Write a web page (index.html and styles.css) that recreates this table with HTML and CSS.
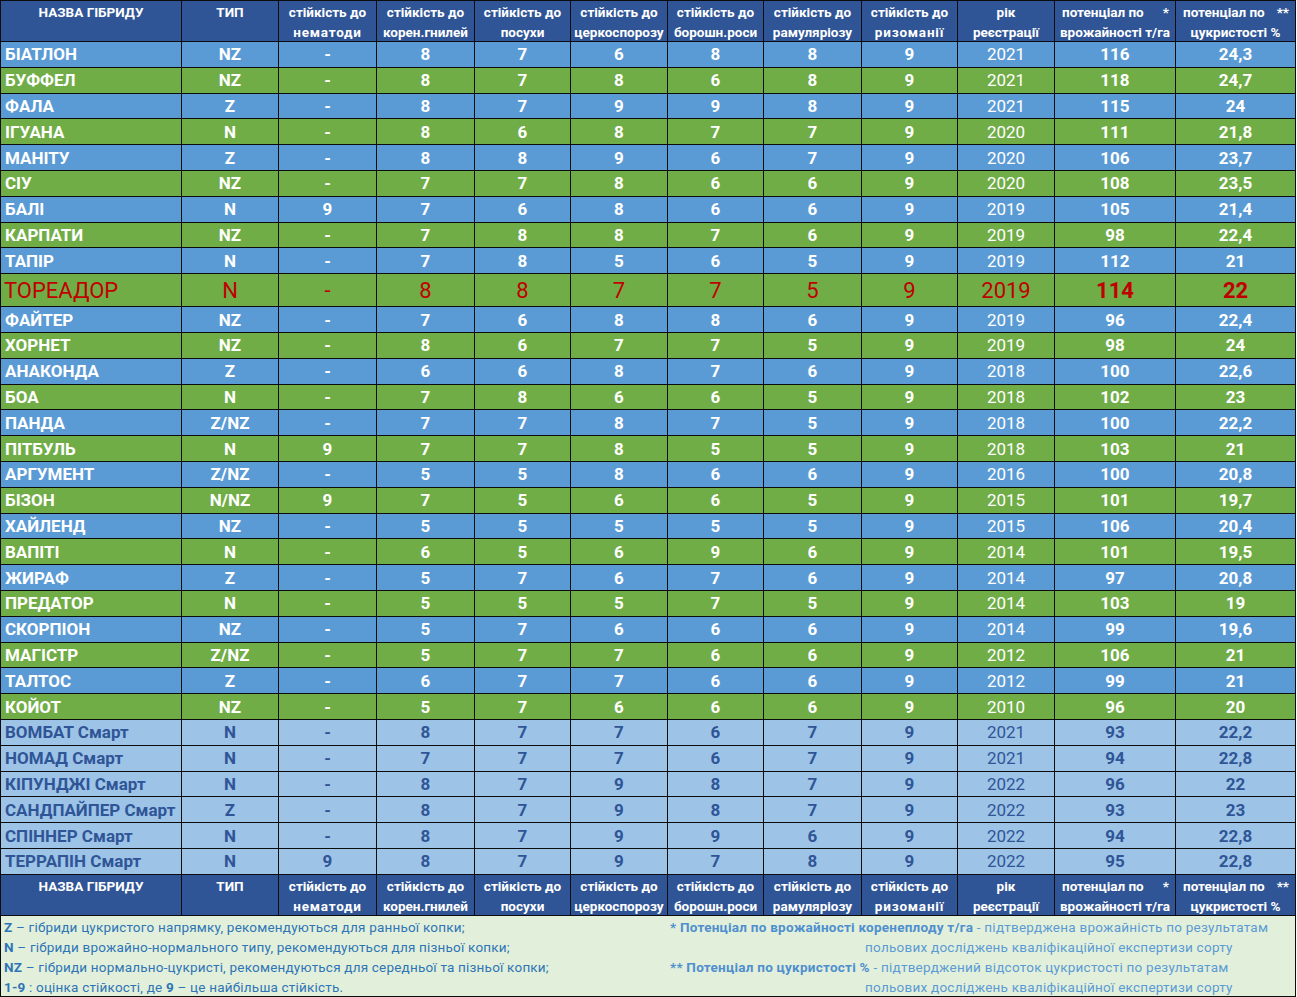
FILE: index.html
```html
<!DOCTYPE html>
<html lang="uk">
<head>
<meta charset="utf-8">
<title>Гібриди цукрового буряка</title>
<link rel="stylesheet" href="styles.css">
</head>
<body>
<div class="sheet">
  <div class="row head">
    <div><span>НАЗВА ГІБРИДУ</span></div>
    <div><span>ТИП</span></div>
    <div><span>стійкість до</span><span class="ls">нематоди</span></div>
    <div><span>стійкість до</span><span>корен.гнилей</span></div>
    <div><span>стійкість до</span><span>посухи</span></div>
    <div><span>стійкість до</span><span>церкоспорозу</span></div>
    <div><span>стійкість до</span><span>борошн.роси</span></div>
    <div><span>стійкість до</span><span>рамуляріозу</span></div>
    <div><span>стійкість до</span><span class="ls">ризоманії</span></div>
    <div><span>рік</span><span>реєстрації</span></div>
    <div class="pot"><span class="l1"><span>потенціал по</span><span>*</span></span><span>врожайності т/га</span></div>
    <div class="pot"><span class="l1"><span>потенціал по</span><span>**</span></span><span>цукристості %</span></div>
  </div>

  <div class="row blue"><div class="name">БІАТЛОН</div><div>NZ</div><div>-</div><div>8</div><div>7</div><div>6</div><div>8</div><div>8</div><div>9</div><div class="yr">2021</div><div>116</div><div>24,3</div></div>
  <div class="row green"><div class="name">БУФФЕЛ</div><div>NZ</div><div>-</div><div>8</div><div>7</div><div>8</div><div>6</div><div>8</div><div>9</div><div class="yr">2021</div><div>118</div><div>24,7</div></div>
  <div class="row blue"><div class="name">ФАЛА</div><div>Z</div><div>-</div><div>8</div><div>7</div><div>9</div><div>9</div><div>8</div><div>9</div><div class="yr">2021</div><div>115</div><div>24</div></div>
  <div class="row green"><div class="name">ІГУАНА</div><div>N</div><div>-</div><div>8</div><div>6</div><div>8</div><div>7</div><div>7</div><div>9</div><div class="yr">2020</div><div>111</div><div>21,8</div></div>
  <div class="row blue"><div class="name">МАНІТУ</div><div>Z</div><div>-</div><div>8</div><div>8</div><div>9</div><div>6</div><div>7</div><div>9</div><div class="yr">2020</div><div>106</div><div>23,7</div></div>
  <div class="row green"><div class="name">СІУ</div><div>NZ</div><div>-</div><div>7</div><div>7</div><div>8</div><div>6</div><div>6</div><div>9</div><div class="yr">2020</div><div>108</div><div>23,5</div></div>
  <div class="row blue"><div class="name">БАЛІ</div><div>N</div><div>9</div><div>7</div><div>6</div><div>8</div><div>6</div><div>6</div><div>9</div><div class="yr">2019</div><div>105</div><div>21,4</div></div>
  <div class="row green"><div class="name">КАРПАТИ</div><div>NZ</div><div>-</div><div>7</div><div>8</div><div>8</div><div>7</div><div>6</div><div>9</div><div class="yr">2019</div><div>98</div><div>22,4</div></div>
  <div class="row blue"><div class="name">ТАПІР</div><div>N</div><div>-</div><div>7</div><div>8</div><div>5</div><div>6</div><div>5</div><div>9</div><div class="yr">2019</div><div>112</div><div>21</div></div>
  <div class="row tor"><div class="name">ТОРЕАДОР</div><div>N</div><div>-</div><div>8</div><div>8</div><div>7</div><div>7</div><div>5</div><div>9</div><div class="yr">2019</div><div class="b">114</div><div class="b">22</div></div>
  <div class="row blue"><div class="name">ФАЙТЕР</div><div>NZ</div><div>-</div><div>7</div><div>6</div><div>8</div><div>8</div><div>6</div><div>9</div><div class="yr">2019</div><div>96</div><div>22,4</div></div>
  <div class="row green"><div class="name">ХОРНЕТ</div><div>NZ</div><div>-</div><div>8</div><div>6</div><div>7</div><div>7</div><div>5</div><div>9</div><div class="yr">2019</div><div>98</div><div>24</div></div>
  <div class="row blue"><div class="name">АНАКОНДА</div><div>Z</div><div>-</div><div>6</div><div>6</div><div>8</div><div>7</div><div>6</div><div>9</div><div class="yr">2018</div><div>100</div><div>22,6</div></div>
  <div class="row green"><div class="name">БОА</div><div>N</div><div>-</div><div>7</div><div>8</div><div>6</div><div>6</div><div>5</div><div>9</div><div class="yr">2018</div><div>102</div><div>23</div></div>
  <div class="row blue"><div class="name">ПАНДА</div><div>Z/NZ</div><div>-</div><div>7</div><div>7</div><div>8</div><div>7</div><div>5</div><div>9</div><div class="yr">2018</div><div>100</div><div>22,2</div></div>
  <div class="row green"><div class="name">ПІТБУЛЬ</div><div>N</div><div>9</div><div>7</div><div>7</div><div>8</div><div>5</div><div>5</div><div>9</div><div class="yr">2018</div><div>103</div><div>21</div></div>
  <div class="row blue"><div class="name">АРГУМЕНТ</div><div>Z/NZ</div><div>-</div><div>5</div><div>5</div><div>8</div><div>6</div><div>6</div><div>9</div><div class="yr">2016</div><div>100</div><div>20,8</div></div>
  <div class="row green"><div class="name">БІЗОН</div><div>N/NZ</div><div>9</div><div>7</div><div>5</div><div>6</div><div>6</div><div>5</div><div>9</div><div class="yr">2015</div><div>101</div><div>19,7</div></div>
  <div class="row blue"><div class="name">ХАЙЛЕНД</div><div>NZ</div><div>-</div><div>5</div><div>5</div><div>5</div><div>5</div><div>5</div><div>9</div><div class="yr">2015</div><div>106</div><div>20,4</div></div>
  <div class="row green"><div class="name">ВАПІТІ</div><div>N</div><div>-</div><div>6</div><div>5</div><div>6</div><div>9</div><div>6</div><div>9</div><div class="yr">2014</div><div>101</div><div>19,5</div></div>
  <div class="row blue"><div class="name">ЖИРАФ</div><div>Z</div><div>-</div><div>5</div><div>7</div><div>6</div><div>7</div><div>6</div><div>9</div><div class="yr">2014</div><div>97</div><div>20,8</div></div>
  <div class="row green"><div class="name">ПРЕДАТОР</div><div>N</div><div>-</div><div>5</div><div>5</div><div>5</div><div>7</div><div>5</div><div>9</div><div class="yr">2014</div><div>103</div><div>19</div></div>
  <div class="row blue"><div class="name">СКОРПІОН</div><div>NZ</div><div>-</div><div>5</div><div>7</div><div>6</div><div>6</div><div>6</div><div>9</div><div class="yr">2014</div><div>99</div><div>19,6</div></div>
  <div class="row green"><div class="name">МАГІСТР</div><div>Z/NZ</div><div>-</div><div>5</div><div>7</div><div>7</div><div>6</div><div>6</div><div>9</div><div class="yr">2012</div><div>106</div><div>21</div></div>
  <div class="row blue"><div class="name">ТАЛТОС</div><div>Z</div><div>-</div><div>6</div><div>7</div><div>7</div><div>6</div><div>6</div><div>9</div><div class="yr">2012</div><div>99</div><div>21</div></div>
  <div class="row green"><div class="name">КОЙОТ</div><div>NZ</div><div>-</div><div>5</div><div>7</div><div>6</div><div>6</div><div>6</div><div>9</div><div class="yr">2010</div><div>96</div><div>20</div></div>
  <div class="row smart"><div class="name">ВОМБАТ Смарт</div><div>N</div><div>-</div><div>8</div><div>7</div><div>7</div><div>6</div><div>7</div><div>9</div><div class="yr">2021</div><div>93</div><div>22,2</div></div>
  <div class="row smart"><div class="name">НОМАД Смарт</div><div>N</div><div>-</div><div>7</div><div>7</div><div>7</div><div>6</div><div>7</div><div>9</div><div class="yr">2021</div><div>94</div><div>22,8</div></div>
  <div class="row smart"><div class="name">КІПУНДЖІ Смарт</div><div>N</div><div>-</div><div>8</div><div>7</div><div>9</div><div>8</div><div>7</div><div>9</div><div class="yr">2022</div><div>96</div><div>22</div></div>
  <div class="row smart"><div class="name">САНДПАЙПЕР Смарт</div><div>Z</div><div>-</div><div>8</div><div>7</div><div>9</div><div>8</div><div>7</div><div>9</div><div class="yr">2022</div><div>93</div><div>23</div></div>
  <div class="row smart"><div class="name">СПІННЕР Смарт</div><div>N</div><div>-</div><div>8</div><div>7</div><div>9</div><div>9</div><div>6</div><div>9</div><div class="yr">2022</div><div>94</div><div>22,8</div></div>
  <div class="row smart"><div class="name">ТЕРРАПІН Смарт</div><div>N</div><div>9</div><div>8</div><div>7</div><div>9</div><div>7</div><div>8</div><div>9</div><div class="yr">2022</div><div>95</div><div>22,8</div></div>

  <div class="row head">
    <div><span>НАЗВА ГІБРИДУ</span></div>
    <div><span>ТИП</span></div>
    <div><span>стійкість до</span><span class="ls">нематоди</span></div>
    <div><span>стійкість до</span><span>корен.гнилей</span></div>
    <div><span>стійкість до</span><span>посухи</span></div>
    <div><span>стійкість до</span><span>церкоспорозу</span></div>
    <div><span>стійкість до</span><span>борошн.роси</span></div>
    <div><span>стійкість до</span><span>рамуляріозу</span></div>
    <div><span>стійкість до</span><span class="ls">ризоманії</span></div>
    <div><span>рік</span><span>реєстрації</span></div>
    <div class="pot"><span class="l1"><span>потенціал по</span><span>*</span></span><span>врожайності т/га</span></div>
    <div class="pot"><span class="l1"><span>потенціал по</span><span>**</span></span><span>цукристості %</span></div>
  </div>

  <div class="notes">
    <div class="legend">
      <p><b>Z</b> – гібриди цукристого напрямку, рекомендуються для ранньої копки;</p>
      <p><b>N</b> – гібриди врожайно-нормального типу, рекомендуються для пізньої копки;</p>
      <p><b>NZ</b> – гібриди нормально-цукристі, рекомендуються для середньої та пізньої копки;</p>
      <p><b>1-9</b> : оцінка стійкості, де <b>9</b> – це найбільша стійкість.</p>
    </div>
    <div class="foot">
      <p><b>* Потенціал по врожайності коренеплоду т/га</b> - підтверджена врожайність по результатам</p>
      <p class="cont">польових досліджень кваліфікаційної експертизи сорту</p>
      <p><b>** Потенціал по цукристості %</b> - підтверджений відсоток цукристості по результатам</p>
      <p class="cont">польових досліджень кваліфікаційної експертизи сорту</p>
    </div>
  </div>
</div>
</body>
</html>
```

FILE: styles.css
```css
* { box-sizing: border-box; }

html, body {
  margin: 0;
  padding: 0;
  background: #ffffff;
}

body {
  font-family: Roboto, "Noto Sans", "Liberation Sans", sans-serif;
}

.sheet {
  display: grid;
  width: 1296px;
  grid-template-columns: 180px 96px 97px 97px 95px 96px 95px 97px 95px 96px 120px 119px;
  grid-template-rows: 40px repeat(9, 24.8px) 32px repeat(22, 24.8px) 40px 80px;
  gap: 1px;
  padding: 1px;
  background: #0d0d0d;
}

.row { display: contents; }

.row > div {
  display: flex;
  align-items: center;
  justify-content: center;
  font-size: 17px;
  font-weight: 700;
  color: #ffffff;
  white-space: nowrap;
  overflow: hidden;
}

.row > .name {
  justify-content: flex-start;
  padding-left: 4px;
}

.row > .yr { font-weight: 400; }

.blue > div { background: #5b9bd5; }
.green > div { background: #70ad47; }

.smart > div {
  background: #9dc3e6;
  color: #2f5597;
}

.tor > div {
  background: #70ad47;
  color: #c00000;
  font-size: 22px;
  font-weight: 400;
}
.tor > .name { padding-left: 3px; }
.tor > .b { font-weight: 700; }

.head > div {
  background: #2f5597;
  flex-direction: column;
  justify-content: flex-start;
  align-items: center;
  padding-top: 1px;
  font-size: 13.5px;
  line-height: 20px;
  font-weight: 700;
}

.head .ls { letter-spacing: 0.8px; }

.head .pot .l1 {
  align-self: stretch;
  display: flex;
  justify-content: space-between;
  padding: 0 6px 0 7px;
}

.notes {
  grid-column: 1 / -1;
  background: #e2efda;
  display: grid;
  grid-template-columns: 667px 1fr;
  padding-top: 1px;
  font-size: 13.5px;
  line-height: 20px;
  letter-spacing: 0.2px;
  white-space: nowrap;
}

.notes p { margin: 0; }

.legend {
  padding-left: 3px;
  color: #2e75b6;
}
.legend b { color: #2e75b6; }

.foot {
  padding-left: 2px;
  color: #5b9bd5;
  letter-spacing: 0.25px;
}
.foot b { color: #4f8fcf; }
.foot .cont { padding-left: 195px; }
```
